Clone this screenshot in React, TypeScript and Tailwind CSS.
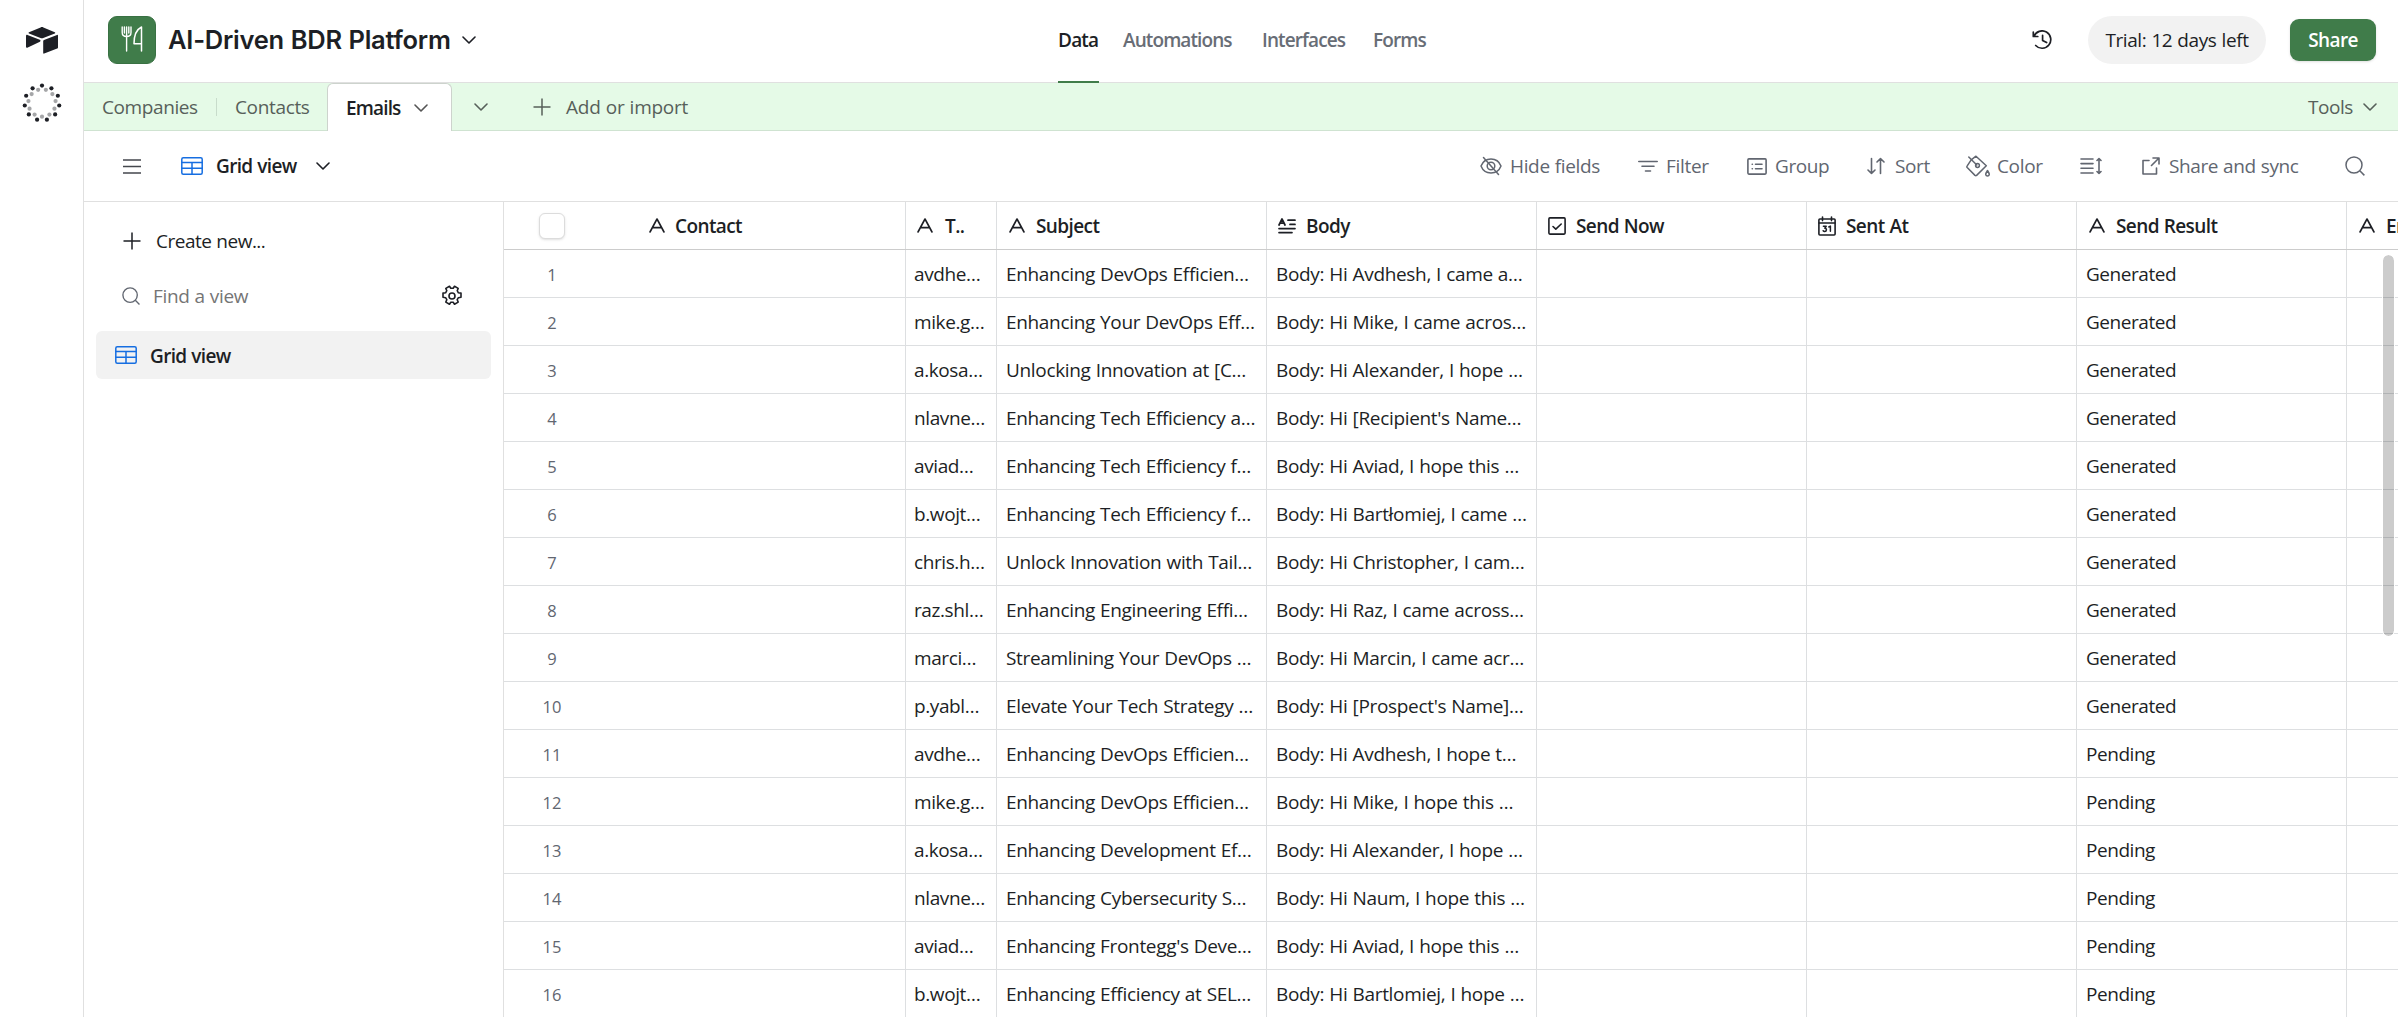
import React from "react";

type IconProps = { w: number; h: number; className?: string; sw?: number; children: React.ReactNode };

function Icon({ w, h, className = "", sw = 1.6, children }: IconProps) {
  return (
    <svg
      width={w}
      height={h}
      viewBox={`0 0 ${w} ${h}`}
      fill="none"
      stroke="currentColor"
      strokeWidth={sw}
      strokeLinecap="round"
      strokeLinejoin="round"
      className={`shrink-0 ${className}`}
    >
      {children}
    </svg>
  );
}

const Chevron = ({ className = "" }: { className?: string }) => (
  <Icon w={14} h={8} className={className}>
    <path d="M1 1l6 6 6-6" />
  </Icon>
);

const Plus = ({ className = "" }: { className?: string }) => (
  <Icon w={18} h={18} className={className} sw={1.5}>
    <path d="M9 .5v17M.5 9h17" strokeLinecap="butt" />
  </Icon>
);

const TextIcon = () => (
  <Icon w={16} h={15}>
    <path d="M1 14L8 1l7 13M3.4 9.6h9.2" />
  </Icon>
);

const LongTextIcon = () => (
  <Icon w={18} h={16} sw={1.7}>
    <path d="M1 7l3-6 3 6M2 5.2h4" />
    <path d="M10 2.2h7M12 6.4h5M1 10.6h16M1 14.6h13" />
  </Icon>
);

const CheckboxIcon = () => (
  <Icon w={18} h={18}>
    <rect x=".9" y=".9" width="16.2" height="16.2" rx="1" />
    <path d="M5 9.5l2.8 2.7L13.2 7" />
  </Icon>
);

const DateIcon = () => (
  <Icon w={18} h={20}>
    <rect x=".9" y="3" width="16.2" height="16" rx="1" />
    <path d="M1 7h16M4.500 1v3.600M13.500 1v3.600" />
    <path d="M5.400 10.200h2.800l-1.400 2c2.400 0 2 3.400-.3 3.200-.6 0-1-.3-1.300-.7M10.800 11l1.600-.9v5.200" strokeWidth="1.5" />
  </Icon>
);

const GridIcon = ({ className = "" }: { className?: string }) => (
  <Icon w={22} h={18} className={`text-[#166ee1] ${className}`} sw={1.5}>
    <rect x=".8" y=".8" width="20.4" height="16.4" rx="1.5" />
    <path d="M1 5.500h20M1 11.300h20M11 5.500v11.700" />
  </Icon>
);

const SearchIcon = ({ size, className = "" }: { size: number; className?: string }) => (
  <svg width={size} height={size} viewBox="0 0 20 20" fill="none" stroke="currentColor" strokeWidth="1.5" className={`shrink-0 ${className}`}>
    <circle cx="9" cy="9" r="8" />
    <path d="M14.800 14.800L19.400 19.400" />
  </svg>
);

function WorkspaceRing() {
  const dots = Array.from({ length: 11 }, (_, i) => (i * 2 * Math.PI) / 11);
  const half = Math.PI / 11;
  return (
    <svg width="40" height="40" viewBox="-20 -20 40 40" className="mt-[29px]">
      {dots.map((a, i) => (
        <g key={i}>
          <circle cx={17.4 * Math.sin(a)} cy={-17.4 * Math.cos(a)} r="2.1" fill="#1d1f25" />
          <circle cx={13.7 * Math.sin(a + half)} cy={-13.7 * Math.cos(a + half)} r="2.1" fill="#a5a6a8" />
        </g>
      ))}
    </svg>
  );
}

function Rail() {
  return (
    <aside className="flex w-[84px] shrink-0 flex-col items-center border-r border-[#e0e0e0] pt-[27px]">
      <svg width="32" height="27" viewBox="0 0 32 27" fill="#1d1f25">
        <path d="M14.600.4c.9-.4 1.900-.4 2.800 0l11.400 4.800c.6.3.6 1 0 1.300L17.300 11c-.9.4-1.900.4-2.800 0L3 6.500c-.6-.3-.6-1 0-1.300z" />
        <path d="M17.200 14.100v11.800c0 .5.5.9 1 .7l13-5c.5-.2.8-.6.8-1.100V8.600c0-.5-.5-.9-1-.7l-13 5c-.5.2-.8.7-.8 1.200z" />
        <path d="M13.900 14.700L1.300 20.700c-.6.3-1.300-.1-1.300-.7V8.900c0-.8.8-1.300 1.500-1l12.300 4.900c.9.3.9 1.500.1 1.900z" />
      </svg>
      <WorkspaceRing />
    </aside>
  );
}

function Header() {
  return (
    <header className="flex h-[83px] shrink-0 items-stretch border-b border-[#e0e0e0]">
      <div className="flex w-[974px] shrink-0 items-center pb-0.5 pl-6">
        <div className="flex size-12 items-center justify-center rounded-[9px] border border-[#397143] bg-[#407c4a] text-white">
          <Icon w={22} h={26} sw={1.5} className="-translate-y-px">
            <path d="M1.200 1v5.500c0 2.500 2 4 4.400 4s4.400-1.500 4.400-4V1M5.600 1v24M3.400 1v6M7.800 1v6" strokeWidth="1.4" />
            <path d="M20.500 25V1c-5 2.500-7.500 9-7.500 16.800h7.500" />
          </Icon>
        </div>
        <h1 className="ml-3 w-[294px] whitespace-nowrap font-['Inter'] text-[25.5px] leading-8 font-semibold tracking-[-0.24px]">
          AI-Driven BDR Platform
        </h1>
        <Chevron />
      </div>
      <nav className="flex w-[974px] shrink-0 font-semibold text-[#686d76]">
        <a className="-mb-px flex w-[41px] items-center border-b-2 border-[#407c4a] pb-0.5 text-[#1d1f25] tracking-[-0.8px]">Data</a>
        <a className="ml-6 flex w-[115px] items-center pb-[3px] tracking-[-0.9px]">Automations</a>
        <a className="ml-6 flex w-[87px] items-center pb-[3px] tracking-[-0.9px]">Interfaces</a>
        <a className="ml-6 flex items-center pb-[3px] tracking-[-0.9px]">Forms</a>
      </nav>
      <div className="flex items-center pb-0.5">
        <Icon w={20} h={20} className="mr-9" sw={1.7}>
          <path d="M1.300 2v4.500h4.500M2 6.300A8.700 8.700 0 1 1 3.700 15.500M10.600 5.400v5l4 2.200" />
        </Icon>
        <div className="flex h-12 w-[178px] items-center justify-center rounded-full bg-[#f2f2f2] tracking-[-0.4px]">Trial: 12 days left</div>
        <button className="ml-6 h-[42px] w-[86px] rounded-[9px] bg-[#407c4a] font-semibold tracking-[-0.6px] text-white shadow-sm">Share</button>
      </div>
    </header>
  );
}

function TabBar() {
  return (
    <div className="flex h-12 shrink-0 items-stretch border-b border-[#cfe3d1] bg-[#e5fae7] text-[#57605a]">
      <div className="flex w-[132px] items-center pt-px pl-[18px] tracking-[-0.4px]">Companies</div>
      <div className="my-auto h-[18px] w-px bg-[#c8dccb]" />
      <div className="flex w-[110px] items-center pt-px pl-[18px] tracking-[-0.35px]">Contacts</div>
      <div className="-mb-px flex w-[125px] items-center rounded-t-md border-x border-t border-[#cdd3cd] bg-white pl-[18px] font-semibold text-[#1d1f25]">
        <span className="w-[68px] tracking-[-0.85px]">Emails</span>
        <Chevron className="text-[#555]" />
      </div>
      <div className="flex flex-1 items-center pl-[22px]">
        <Chevron />
        <Plus className="ml-[45px]" />
        <span className="ml-[15px] pt-px tracking-[-0.25px]">Add or import</span>
        <span className="ml-auto w-[55px] pt-px tracking-[-0.45px]">Tools</span>
        <Chevron className="mr-[21px]" />
      </div>
    </div>
  );
}

function ToolItem({ icon, label, className }: { icon: React.ReactNode; label?: string; className: string }) {
  return (
    <div className={`flex shrink-0 items-center ${className}`}>
      {icon}
      {label && <span>{label}</span>}
    </div>
  );
}

function Toolbar() {
  return (
    <div className="flex h-[71px] shrink-0 items-center border-b border-[#e0e0e0] whitespace-nowrap">
      <Icon w={18} h={15} className="ml-[39px] text-[#44474d]">
        <path d="M.5 1h17M.5 7.500h17M.5 14h17" />
      </Icon>
      <GridIcon className="ml-10" />
      <span className="ml-[13px] w-[100px] font-semibold tracking-[-0.65px]">Grid view</span>
      <Chevron />
      <div className="ml-auto flex items-center text-[#616670]">
        <ToolItem
          className="w-[158px] gap-2 tracking-[-0.35px]"
          label="Hide fields"
          icon={
            <Icon w={22} h={20} sw={1.5}>
              <path d="M1 10c2-5 6-7 10-7s8 2 10 7c-2 5-6 7-10 7S3 15 1 10z" />
              <circle cx="11" cy="10" r="3.8" />
              <path d="M3.500 1.500l15 17" />
            </Icon>
          }
        />
        <ToolItem
          className="w-[109px] gap-2 tracking-[-0.3px]"
          label="Filter"
          icon={
            <Icon w={20} h={12}>
              <path d="M.8 1.500h18.400M4 6.200h12M7.500 11h5" />
            </Icon>
          }
        />
        <ToolItem
          className="w-[120px] gap-2 tracking-[-0.4px]"
          label="Group"
          icon={
            <Icon w={20} h={17}>
              <rect x=".9" y=".9" width="18.2" height="15.2" rx="1" />
              <path d="M5.200 6.200h.2M8.500 6.200h6.500M5.200 10.800h.2M8.500 10.800h6.500" />
            </Icon>
          }
        />
        <ToolItem
          className="w-[99px] gap-2.5 tracking-[-0.4px]"
          label="Sort"
          icon={
            <Icon w={18} h={18}>
              <path d="M4.500 1.500v15M1 13l3.500 3.500L8 13M13.500 16.500v-15M10 5l3.500-3.500L17 5" />
            </Icon>
          }
        />
        <ToolItem
          className="w-[114px] gap-[7px] tracking-[-0.35px]"
          label="Color"
          icon={
            <Icon w={24} h={22} sw={1.5}>
              <path d="M2.800 2l8 8" />
              <path d="M5.200 4.800L10 1.200l10.300 9.600-9.700 9.600q-.8.6-1.600 0L1.200 12.500q-.7-.8 0-1.600z" />
              <circle cx="11.5" cy="10.5" r="1.9" />
              <path d="M21.500 15.500c3 4.500 1.500 5.500 0 5.500s-3-1 0-5.500z" />
            </Icon>
          }
        />
        <ToolItem
          className="w-[62px]"
          icon={
            <Icon w={22} h={18}>
              <path d="M1 2h12M1 6.600h12M1 11.300h12M1 16h12M19 1.500v15M17 3.500l2-2 2 2M17 14.500l2 2 2-2" />
            </Icon>
          }
        />
        <ToolItem
          className="w-[203px] gap-[9px] tracking-[-0.4px]"
          label="Share and sync"
          icon={
            <Icon w={18} h={18}>
              <path d="M7 3.500H1v13.500h13.500V11M11 1h6v6M17 1L9.500 8.500" />
            </Icon>
          }
        />
        <SearchIcon size={20} className="mr-[33px]" />
      </div>
    </div>
  );
}

function ViewSidebar() {
  return (
    <aside className="flex w-[420px] shrink-0 flex-col border-r border-[#e0e0e0]">
      <div className="mt-[15px] flex h-12 items-center pl-[39px]">
        <Plus />
        <span className="ml-[15px] tracking-[-0.5px]">Create new...</span>
      </div>
      <div className="mt-[7px] flex h-12 items-center pl-[38px] text-[#616670]">
        <SearchIcon size={18} />
        <span className="ml-[13px] text-[#757575] tracking-[-0.35px]">Find a view</span>
        <Icon w={22} h={22} className="mr-10 ml-auto text-[#1d1f25]">
          <path d="M8.500 1.300l1.300 2h2.400l1.300-2 3.700 2.100-1 2.300 1.200 2.100 2.600.3v4.200l-2.600.4-1.200 2 1 2.400-3.700 2.100-1.300-2H9.800l-1.300 2-3.700-2.100 1-2.400-1.200-2-2.600-.4V8.100l2.600-.3 1.200-2.100-1-2.300z" />
          <circle cx="11" cy="11" r="3" />
        </Icon>
      </div>
      <div className="mx-3 mt-[11px] flex h-12 items-center rounded-md bg-[#f2f2f2] pl-[19px] font-semibold">
        <GridIcon />
        <span className="ml-[13px] pt-0.5 tracking-[-0.65px]">Grid view</span>
      </div>
    </aside>
  );
}

const EMAILS = [
  ["avdhe…", "Enhancing DevOps Efficien…", "Body: Hi Avdhesh, I came a…", "Generated"],
  ["mike.g…", "Enhancing Your DevOps Eff…", "Body: Hi Mike, I came acros…", "Generated"],
  ["a.kosa…", "Unlocking Innovation at [C…", "Body: Hi Alexander, I hope …", "Generated"],
  ["nlavne…", "Enhancing Tech Efficiency a…", "Body: Hi [Recipient's Name…", "Generated"],
  ["aviad…", "Enhancing Tech Efficiency f…", "Body: Hi Aviad, I hope this …", "Generated"],
  ["b.wojt…", "Enhancing Tech Efficiency f…", "Body: Hi Bartłomiej, I came …", "Generated"],
  ["chris.h…", "Unlock Innovation with Tail…", "Body: Hi Christopher, I cam…", "Generated"],
  ["raz.shl…", "Enhancing Engineering Effi…", "Body: Hi Raz, I came across…", "Generated"],
  ["marci…", "Streamlining Your DevOps …", "Body: Hi Marcin, I came acr…", "Generated"],
  ["p.yabl…", "Elevate Your Tech Strategy …", "Body: Hi [Prospect's Name]…", "Generated"],
  ["avdhe…", "Enhancing DevOps Efficien…", "Body: Hi Avdhesh, I hope t…", "Pending"],
  ["mike.g…", "Enhancing DevOps Efficien…", "Body: Hi Mike, I hope this …", "Pending"],
  ["a.kosa…", "Enhancing Development Ef…", "Body: Hi Alexander, I hope …", "Pending"],
  ["nlavne…", "Enhancing Cybersecurity S…", "Body: Hi Naum, I hope this …", "Pending"],
  ["aviad…", "Enhancing Frontegg's Deve…", "Body: Hi Aviad, I hope this …", "Pending"],
  ["b.wojt…", "Enhancing Efficiency at SEL…", "Body: Hi Bartlomiej, I hope …", "Pending"],
];

const CELL = "flex shrink-0 items-center whitespace-nowrap border-r border-[#dddfe1] overflow-hidden";
const HEAD = "flex shrink-0 items-center whitespace-nowrap border-r border-[#dddfe1] overflow-hidden font-semibold tracking-[-0.6px]";

function Grid() {
  return (
    <main className="relative flex-1 overflow-hidden">
      <div className="flex h-12 border-b border-[#cccccc]">
        <div className={`${HEAD} w-[402px] border-[#c8cacc]`}>
          <span className="ml-[35px] size-[26px] rounded-md border border-[#dcdcdc] bg-white shadow-sm" />
          <span className="ml-[84px] flex items-center gap-2.5">
            <TextIcon />
            Contact
          </span>
        </div>
        <div className={`${HEAD} w-[91px] gap-3 pl-[11px]`}>
          <TextIcon />
          T..
        </div>
        <div className={`${HEAD} w-[270px] gap-[11px] pl-3`}>
          <TextIcon />
          Subject
        </div>
        <div className={`${HEAD} w-[270px] gap-[10px] pl-[11px]`}>
          <LongTextIcon />
          Body
        </div>
        <div className={`${HEAD} w-[270px] gap-[10px] pl-[11px]`}>
          <CheckboxIcon />
          Send Now
        </div>
        <div className={`${HEAD} w-[270px] gap-[10px] pl-[11px]`}>
          <DateIcon />
          Sent At
        </div>
        <div className={`${HEAD} w-[270px] gap-[11px] pl-3`}>
          <TextIcon />
          Send Result
        </div>
        <div className={`${HEAD} w-[270px] gap-[11px] pl-3`}>
          <TextIcon />
          Error
        </div>
      </div>
      {EMAILS.map(([to, subject, body, result], i) => (
        <div key={i} className="flex h-12 border-b border-[#dddfe1] tracking-[-0.33px]">
          <div className={`${CELL} w-[402px] border-[#c8cacc]`}>
            <span className="w-24 pt-0.5 text-center text-[16.5px] tracking-normal text-[#616670]">{i + 1}</span>
          </div>
          <div className={`${CELL} w-[91px] pl-[8px] tracking-[-0.4px]`}>{to}</div>
          <div className={`${CELL} w-[270px] pl-[9px]`}>{subject}</div>
          <div className={`${CELL} w-[270px] pl-[9px]`}>{body}</div>
          <div className={`${CELL} w-[270px]`} />
          <div className={`${CELL} w-[270px]`} />
          <div className={`${CELL} w-[270px] pl-[9px] tracking-[-0.45px]`}>{result}</div>
          <div className={`${CELL} w-[270px]`} />
        </div>
      ))}
      <div className="absolute top-[52px] right-[3px] h-[383px] w-[13px] rounded-full border border-white bg-black/20 bg-clip-padding" />
    </main>
  );
}

export default function App() {
  return (
    <div className="flex h-[1017px] w-[2398px] overflow-hidden bg-white font-['Open_Sans',sans-serif] text-[19px] leading-6 [word-spacing:0.5px] text-[#1d1f25]">
      <Rail />
      <div className="flex min-w-0 flex-1 flex-col">
        <Header />
        <TabBar />
        <Toolbar />
        <div className="flex min-h-0 flex-1">
          <ViewSidebar />
          <Grid />
        </div>
      </div>
    </div>
  );
}
